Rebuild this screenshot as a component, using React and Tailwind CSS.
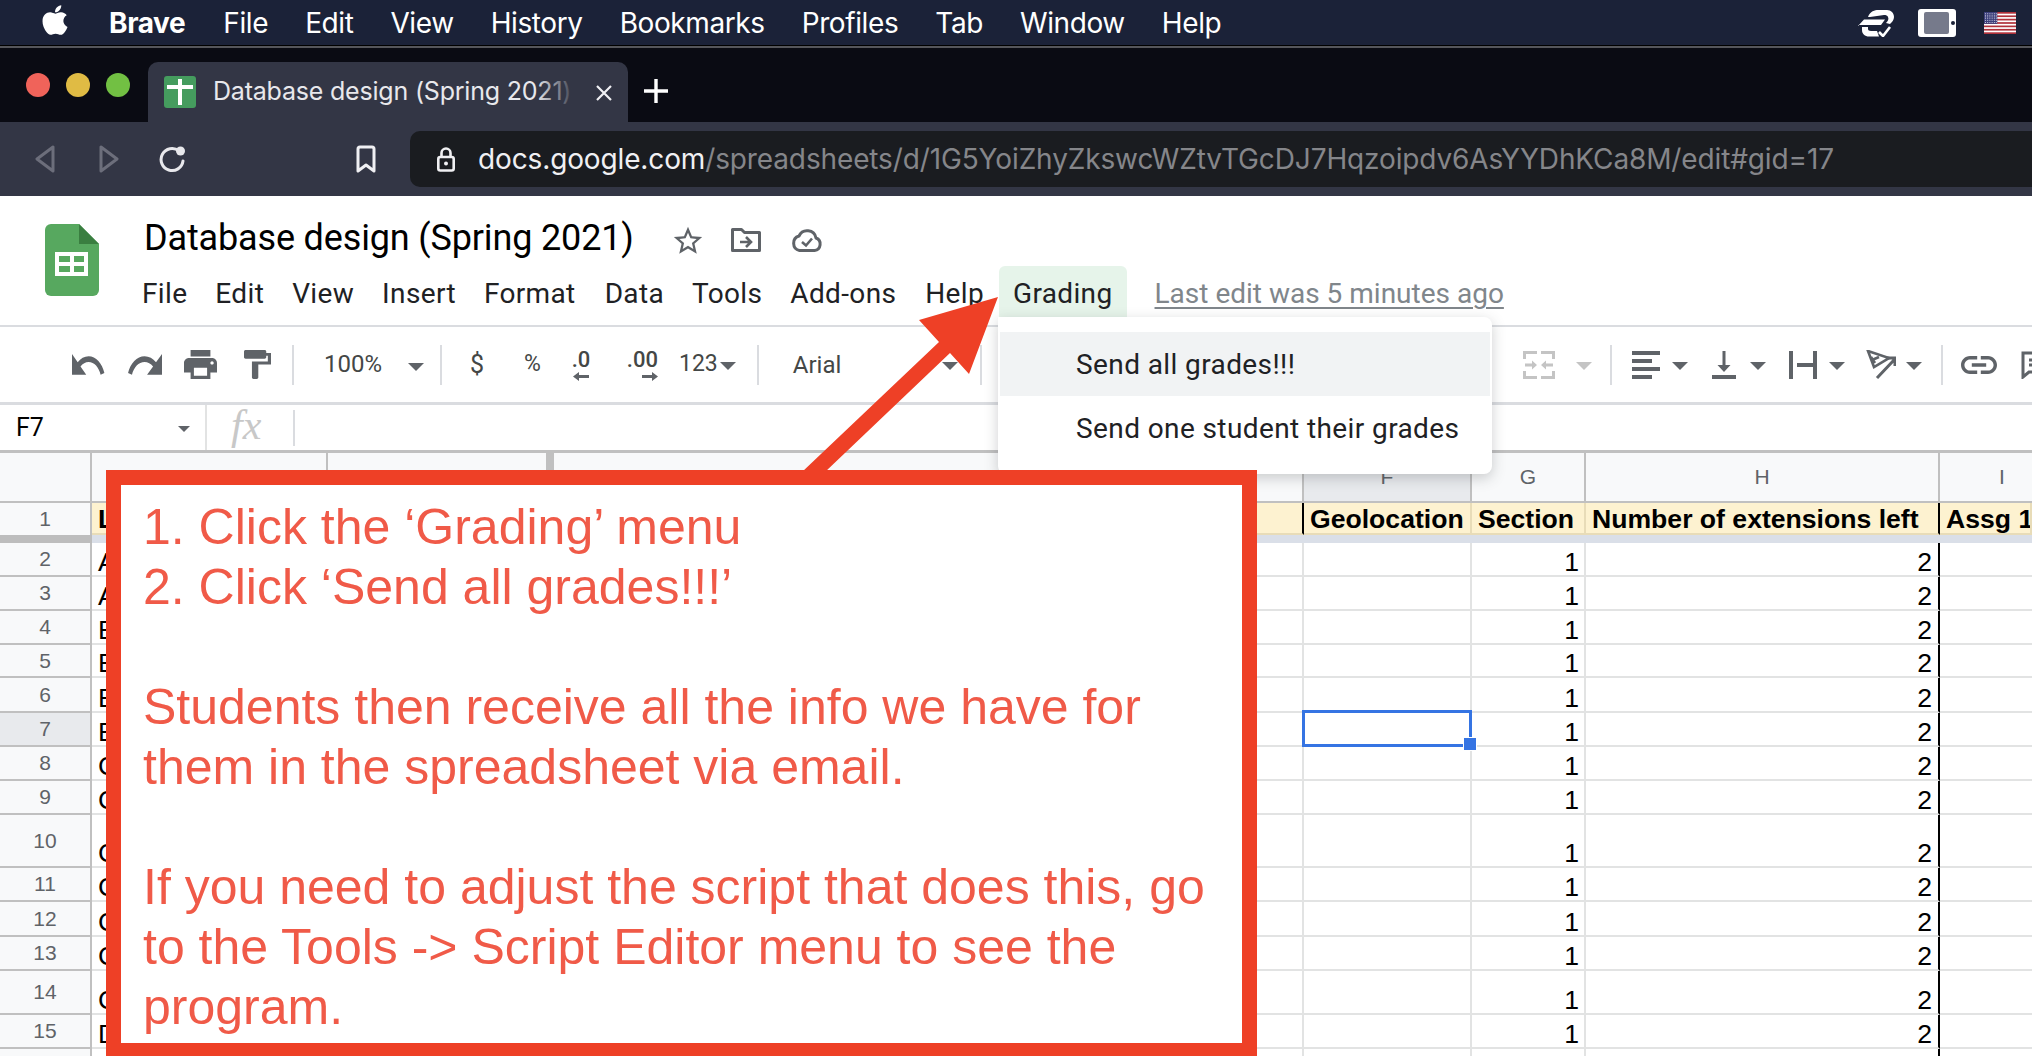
import React from 'react';
import { FaApple } from 'react-icons/fa';

const G = '#5f6368';

function Caret({ className = '', color = '#5f6368' }) {
  return (
    <svg width="16" height="8" viewBox="0 0 16 8" className={'shrink-0 ' + className}>
      <path d="M0 0h16L8 8z" fill={color} />
    </svg>
  );
}

function Mi({ w, h, d, vb = '0 0 24 24', color = G, className = '' }) {
  return (
    <svg width={w} height={h} viewBox={vb} preserveAspectRatio="none" className={'shrink-0 ' + className}>
      <path d={d} fill={color} />
    </svg>
  );
}

function Sep({ className = '' }) {
  return <div className={'w-[2px] h-[40px] bg-[#dadce0] shrink-0 ' + className} />;
}

function ToolText({ className = '', children }) {
  return <span className={"shrink-0 font-['Roboto',sans-serif] text-[#444746] " + className}>{children}</span>;
}

const rows = [
  { n: '2', l: 'A', h: 'h-[34px]' },
  { n: '3', l: 'A', h: 'h-[34px]' },
  { n: '4', l: 'B', h: 'h-[34px]' },
  { n: '5', l: 'B', h: 'h-[33px]' },
  { n: '6', l: 'B', h: 'h-[35px]' },
  { n: '7', l: 'B', h: 'h-[34px]', sel: true },
  { n: '8', l: 'C', h: 'h-[34px]' },
  { n: '9', l: 'C', h: 'h-[34px]' },
  { n: '10', l: 'C', h: 'h-[53px]' },
  { n: '11', l: 'C', h: 'h-[34px]' },
  { n: '12', l: 'C', h: 'h-[35px]' },
  { n: '13', l: 'C', h: 'h-[34px]' },
  { n: '14', l: 'C', h: 'h-[44px]' },
  { n: '15', l: 'D', h: 'h-[34px]' },
  { n: '', l: '', h: 'h-[34px]', blank: true },
];

function DataRow({ r }) {
  const cell = 'h-full border-r-2 border-b-2 border-[#e2e3e3] shrink-0 flex items-end justify-end pr-[5px] leading-[26px]';
  return (
    <div className={'flex ' + r.h}>
      <div className={'w-[92px] h-full shrink-0 border-r-2 border-b-2 border-[#c0c0c0] flex items-center justify-center text-[21px] text-[#5f6368] ' + (r.sel ? 'bg-[#e8eaed]' : 'bg-[#f8f9fa]')}>
        {r.n}
      </div>
      <div className="w-[236px] h-full shrink-0 border-r-2 border-b-2 border-[#e2e3e3] flex items-end pl-[6px] leading-[26px]">{r.l}</div>
      <div className="w-[226px] h-full shrink-0 border-r-2 border-b-2 border-[#e2e3e3]" />
      <div className="w-[272px] h-full shrink-0 border-r-2 border-b-2 border-[#e2e3e3]" />
      <div className="w-[236px] h-full shrink-0 border-r-2 border-b-2 border-[#e2e3e3]" />
      <div className="w-[242px] h-full shrink-0 border-r-2 border-b-2 border-[#e2e3e3]" />
      <div className="w-[168px] h-full shrink-0 border-r-2 border-b-2 border-[#e2e3e3]" />
      <div className={'w-[114px] ' + cell}>{r.blank ? '' : '1'}</div>
      <div className="w-[354px] h-full shrink-0 border-b-2 border-[#e2e3e3] border-r-2 [border-right-color:#000] flex items-end justify-end pr-[6px] leading-[26px]">{r.blank ? '' : '2'}</div>
      <div className="flex-1 h-full border-b-2 border-[#e2e3e3]" />
    </div>
  );
}

function ColHead({ className, children }) {
  return (
    <div className={'h-full shrink-0 border-r-2 border-[#c0c0c0] flex items-center justify-center text-[21px] text-[#5f6368] ' + className}>
      {children}
    </div>
  );
}

function HeadCell({ className, children }) {
  return (
    <div className={'h-full shrink-0 border-r-2 border-b-2 border-[#e8dcb8] bg-[#fdf2d0] flex items-center pl-[6px] pt-[4px] font-bold whitespace-nowrap overflow-hidden ' + className}>
      {children}
    </div>
  );
}

function Flag() {
  const stripes = [0, 2, 4, 6, 8, 10, 12];
  return (
    <svg width="32" height="22" viewBox="0 0 13 9" preserveAspectRatio="none" className="shrink-0">
      <rect width="13" height="9" fill="#fff" />
      {stripes.map((s) => (
        <rect key={s} y={s * 0.692} width="13" height="0.692" fill="#b0313a" />
      ))}
      <rect width="5.4" height="4.85" fill="#3c3f7a" />
      {[0.7, 1.6, 2.5, 3.4, 4.3].map((y) =>
        [0.6, 1.5, 2.4, 3.3, 4.2, 5].map((x) => <circle key={x + '-' + y} cx={x} cy={y} r="0.22" fill="#e6e6f2" />)
      )}
    </svg>
  );
}

export default function App() {
  return (
    <div className="relative w-[2032px] h-[1056px] overflow-hidden bg-white font-['Liberation_Sans',Arial,sans-serif] text-black">
      {/* macOS menu bar */}
      <div className="h-[45px] bg-[#1b2238] flex items-center text-white font-['Inter',sans-serif] text-[28px] tracking-[-0.4px] whitespace-nowrap">
        <FaApple className="ml-[39px] w-[32px] h-[34px] mb-[6px] shrink-0" />
        <span className="ml-[38px] font-bold">Brave</span>
        <span className="ml-[38px]">File</span>
        <span className="ml-[37px]">Edit</span>
        <span className="ml-[37px]">View</span>
        <span className="ml-[37px]">History</span>
        <span className="ml-[37px]">Bookmarks</span>
        <span className="ml-[37px]">Profiles</span>
        <span className="ml-[37px]">Tab</span>
        <span className="ml-[37px]">Window</span>
        <span className="ml-[37px]">Help</span>
        <div className="ml-auto flex items-center">
          <svg width="36" height="28" viewBox="0 0 36 28" className="shrink-0">
            <path d="M10 8C12 2 17 1 20 1H29C33 1 36 4 36 8C36 11 34 13 32 15L28 14C30 12 31 10 30 8C29.500 6.500 28 6 26 6L12 8Z" fill="#fff" />
            <path d="M0 17L6 10.500H27L23 16H0Z" fill="#fff" />
            <path d="M4 18H10V20C10 21 11 22 13 22H19L21 27.500H11C7 27.500 4 25 4 21Z" fill="#fff" />
            <path d="M21 23l4 4 7-9" fill="none" stroke="#fff" strokeWidth="2.6" />
          </svg>
          <div className="ml-[24px] w-[38px] h-[28px] bg-white rounded-[3px] flex items-center pl-[6px] shrink-0">
            <div className="w-[25px] h-[22px] bg-[#767a8b] rounded-[2px]" />
            <div className="ml-[2px] w-[4px] h-[4px] rounded-full bg-[#1b2238]" />
          </div>
          <div className="ml-[28px] mr-[16px]">
            <Flag />
          </div>
        </div>
      </div>
      <div className="h-[1px] bg-black" />
      <div className="h-[2px] bg-[#55565b]" />

      {/* Browser tab strip */}
      <div className="h-[74px] bg-[#0a0b13] flex items-center pl-[26px] font-['Inter',sans-serif]">
        <div className="flex gap-[16px] shrink-0">
          <div className="w-[24px] h-[24px] rounded-full bg-[#f0635a]" />
          <div className="w-[24px] h-[24px] rounded-full bg-[#e0bb44]" />
          <div className="w-[24px] h-[24px] rounded-full bg-[#72c043]" />
        </div>
        <div className="relative ml-[18px] mt-[14px] w-[480px] h-[60px] bg-[#333645] rounded-t-[10px] flex items-center shrink-0 overflow-hidden">
          <div className="ml-[16px] w-[32px] h-[32px] rounded-[3px] bg-[#459c5e] relative shrink-0">
            <div className="absolute left-[14px] top-[3px] w-[4px] h-[26px] bg-white" />
            <div className="absolute left-[3px] top-[9px] w-[26px] h-[4px] bg-white" />
          </div>
          <span className="ml-[17px] text-[25px] text-[#e8e8ec] whitespace-nowrap tracking-[-0.2px]">Database design (Spring 2021)</span>
          <div className="absolute left-[388px] top-0 w-[40px] h-full bg-gradient-to-r from-transparent to-[#333645]" />
          <svg width="16" height="16" viewBox="0 0 16 16" className="absolute left-[448px] top-[23px]">
            <path d="M1 1l14 14M15 1L1 15" stroke="#f0f0f3" strokeWidth="2.2" />
          </svg>
        </div>
        <svg width="24" height="24" viewBox="0 0 24 24" className="ml-[16px] mt-[12px] shrink-0">
          <path d="M12 0v24M0 12h24" stroke="#fff" strokeWidth="3.4" />
        </svg>
      </div>

      {/* Browser toolbar */}
      <div className="h-[74px] bg-[#333645] flex items-center font-['Inter',sans-serif]">
        <svg width="20" height="28" viewBox="0 0 20 28" className="ml-[35px] shrink-0">
          <path d="M18 2v24L2 14z" fill="none" stroke="#6c6e7b" strokeWidth="3" strokeLinejoin="round" />
        </svg>
        <svg width="20" height="28" viewBox="0 0 20 28" className="ml-[44px] shrink-0">
          <path d="M2 2v24l16-12z" fill="none" stroke="#6c6e7b" strokeWidth="3" strokeLinejoin="round" />
        </svg>
        <svg width="28" height="28" viewBox="0 0 28 28" className="ml-[39px] shrink-0">
          <path d="M21 6A11 11 0 1 0 25 16" fill="none" stroke="#e8e8ec" strokeWidth="3" strokeLinecap="round" />
          <circle cx="22.5" cy="6" r="4.5" fill="#e8e8ec" />
        </svg>
        <svg width="20" height="28" viewBox="0 0 20 28" className="ml-[170px] shrink-0">
          <path d="M2 4a2 2 0 0 1 2-2h12a2 2 0 0 1 2 2v22l-8-6-8 6z" fill="none" stroke="#f0f0f3" strokeWidth="3" strokeLinejoin="round" />
        </svg>
        <div className="ml-[34px] flex-1 h-[56px] bg-[#1a1c20] rounded-l-[10px] flex items-center pl-[27px] whitespace-nowrap">
          <svg width="18" height="26" viewBox="0 0 18 26" className="shrink-0">
            <path d="M4.5 11V7a4.5 4.5 0 0 1 9 0v4" fill="none" stroke="#f0f0f3" strokeWidth="2.6" />
            <rect x="1.3" y="11" width="15.4" height="13.5" rx="2" fill="none" stroke="#f0f0f3" strokeWidth="2.6" />
            <circle cx="9" cy="17.500" r="2" fill="#f0f0f3" />
          </svg>
          <span className="ml-[23px] text-[28px] tracking-[-0.13px] text-[#f0f0f3]">docs.google.com<span className="text-[#85868a]">/spreadsheets/d/1G5YoiZhyZkswcWZtvTGcDJ7Hqzoipdv6AsYYDhKCa8M/edit#gid=17</span></span>
        </div>
      </div>

      {/* Docs header */}
      <div className="h-[131px] border-b-2 border-[#dadce0] flex font-['Roboto',sans-serif] whitespace-nowrap">
        <svg width="54" height="72" viewBox="0 0 54 72" className="ml-[45px] mt-[28px] shrink-0">
          <path d="M34 0H6a6 6 0 0 0-6 6v60a6 6 0 0 0 6 6h42a6 6 0 0 0 6-6V20L34 0z" fill="#57a85f" />
          <path d="M34 0l20 20H34z" fill="#3a7e40" />
          <path d="M10 28h33v24H10z" fill="#fff" />
          <path d="M14 32h11v6H14zM29 32h10v6H29zM14 42h11v6H14zM29 42h10v6H29z" fill="#57a85f" />
        </svg>
        <div className="ml-[44px] flex flex-col">
          <div className="mt-[22px] h-[40px] flex items-center">
            <span className="text-[36px] text-black tracking-[-0.15px] ml-[1px]">Database design (Spring 2021)</span>
            <Mi w={34} h={34} color="#5f6368" className="ml-[37px] mt-[6px]" d="M22 9.24l-7.19-.62L12 2 9.19 8.63 2 9.24l5.46 4.73L5.82 21 12 17.27 18.18 21l-1.63-7.03L22 9.24zM12 15.4l-3.76 2.27 1-4.28-3.32-2.88 4.38-.38L12 6.1l1.71 4.04 4.38.38-3.32 2.88 1 4.28L12 15.4z" />
            <svg width="30" height="24" viewBox="0 0 30 24" className="ml-[26px] mt-[4px] shrink-0">
              <path d="M1.5 1.5h9l3 3h15v18h-27z" fill="none" stroke="#5f6368" strokeWidth="3" strokeLinejoin="round" />
              <path d="M9 14h10M15 9l5 5-5 5" fill="none" stroke="#5f6368" strokeWidth="2.6" />
            </svg>
            <svg width="32" height="24" viewBox="0 0 32 24" className="ml-[30px] mt-[4px] shrink-0">
              <path d="M25 10A9 9 0 0 0 8 8 7.5 7.5 0 0 0 8.5 22.5h15A6.5 6.5 0 0 0 25 10z" fill="none" stroke="#5f6368" strokeWidth="3" strokeLinejoin="round" />
              <path d="M11 14l4 3.5 6-7" fill="none" stroke="#5f6368" strokeWidth="2.6" />
            </svg>
          </div>
          <div className="mt-[8px] h-[52px] flex items-center text-[28px] tracking-[0.35px] text-[#202124] ml-[-1px] [&>span]:pt-[4px]">
            <span>File</span>
            <span className="ml-[28px]">Edit</span>
            <span className="ml-[28px]">View</span>
            <span className="ml-[28px]">Insert</span>
            <span className="ml-[28px]">Format</span>
            <span className="ml-[29px]">Data</span>
            <span className="ml-[28px]">Tools</span>
            <span className="ml-[28px]">Add-ons</span>
            <span className="ml-[29px]">Help</span>
            <span className="ml-[15px] h-full px-[14px] flex items-center bg-[#e6f4ea] rounded-t-[6px]">Grading</span>
            <span className="ml-[28px] tracking-normal text-[#80868b] underline underline-offset-[4px] decoration-2">Last edit was 5 minutes ago</span>
          </div>
        </div>
      </div>

      {/* Sheets toolbar */}
      <div className="h-[75px] flex items-center overflow-hidden whitespace-nowrap">
        <Mi w={34} h={22} className="ml-[72px]" d="M12.5 8c-2.65 0-5.05.99-6.9 2.6L2 7v9h9l-3.62-3.62c1.39-1.16 3.16-1.88 5.12-1.88 3.54 0 6.55 2.31 7.6 5.5l2.37-.78C21.08 11.03 17.15 8 12.5 8z" vb="2 7 21.5 9.5" />
        <Mi w={34} h={22} className="ml-[22px]" d="M18.4 10.6C16.55 8.99 14.15 8 11.5 8c-4.65 0-8.58 3.03-9.96 7.22L3.9 16c1.05-3.19 4.05-5.5 7.6-5.5 1.95 0 3.73.72 5.12 1.88L13 16h9V7l-3.6 3.6z" vb="1.5 7 20.5 9.5" />
        <Mi w={33} h={29} className="ml-[22px]" d="M19 8H5c-1.66 0-3 1.34-3 3v6h4v4h12v-4h4v-6c0-1.66-1.34-3-3-3zm-3 11H8v-5h8v5zm3-7c-.55 0-1-.45-1-1s.45-1 1-1 1 .45 1 1-.45 1-1 1zm-1-9H6v4h12V3z" vb="2 3 20 18" />
        <Mi w={27} h={29} className="ml-[27px]" d="M18 4V3c0-.55-.45-1-1-1H5c-.55 0-1 .45-1 1v4c0 .55.45 1 1 1h12c.55 0 1-.45 1-1V6h1v4H9v11c0 .55.45 1 1 1h2c.55 0 1-.45 1-1v-9h8V4h-3z" vb="4 2 17 20" />
        <Sep className="ml-[21px]" />
        <ToolText className="ml-[30px] text-[24px] mb-[2px]">100%</ToolText>
        <Caret className="ml-[26px] mt-[4px]" />
        <Sep className="ml-[16px]" />
        <ToolText className="ml-[28px] text-[25px]">$</ToolText>
        <ToolText className="ml-[40px] text-[23px]">%</ToolText>
        <div className="ml-[28px] flex flex-col items-center w-[24px] shrink-0">
          <ToolText className="text-[22px] leading-[24px] font-medium">.0</ToolText>
          <Mi w={16} h={9} vb="0 0 16 9" d="M0 4.5L6 0v3h10v3H6v3z" />
        </div>
        <div className="ml-[29px] flex flex-col items-end w-[36px] shrink-0">
          <ToolText className="text-[22px] leading-[24px] font-medium">.00</ToolText>
          <Mi w={16} h={9} vb="0 0 16 9" d="M16 4.5L10 0v3H0v3h10v3z" />
        </div>
        <ToolText className="ml-[21px] text-[23px]">123</ToolText>
        <Caret className="ml-[2px] mt-[2px]" />
        <Sep className="ml-[21px]" />
        <ToolText className="ml-[34px] text-[24px]">Arial</ToolText>
        <Caret className="ml-[101px] mt-[2px]" />
        <Sep className="ml-[22px]" />
        <div className="ml-[507px] w-[3px] h-[28px] bg-[#5f6368] shrink-0" />
        <svg width="32" height="28" viewBox="0 0 32 28" className="ml-[31px] shrink-0">
          <path d="M0 8V0h14v3H3v5zM32 8V0H18v3h11v5zM0 20v8h14v-3H3v-5zM32 20v8H18v-3h11v-5zM2 12.5h7v-3l5 4.5-5 4.5v-3H2zM30 12.5h-7v-3l-5 4.5 5 4.5v-3h7z" fill="#c4c4c4" />
        </svg>
        <Caret color="#c4c4c4" className="ml-[21px] mt-[2px]" />
        <Sep className="ml-[18px]" />
        <svg width="28" height="28" viewBox="0 0 28 28" className="ml-[20px] shrink-0">
          <path d="M0 0h28v4H0zM0 8h20v4H0zM0 16h28v4H0zM0 24h20v4H0z" fill="#5f6368" />
        </svg>
        <Caret className="ml-[12px] mt-[2px]" />
        <svg width="24" height="28" viewBox="0 0 24 28" className="ml-[24px] shrink-0">
          <path d="M10.500 0h3v14h5l-6.500 7-6.500-7h5zM0 24h24v4H0z" fill="#5f6368" />
        </svg>
        <Caret className="ml-[14px] mt-[2px]" />
        <svg width="28" height="28" viewBox="0 0 28 28" className="ml-[23px] shrink-0">
          <path d="M0 0h4v28H0zM24 0h4v28h-4zM8 12h16v4H8z" fill="#5f6368" />
        </svg>
        <Caret className="ml-[12px] mt-[2px]" />
        <svg width="30" height="30" viewBox="0 0 30 30" className="ml-[21px] shrink-0">
          <path d="M2 1l21 7-15 9zM5 7l4 6M6 10l7-3" fill="none" stroke="#5f6368" strokeWidth="2.6" />
          <path d="M11 28L28 10M21 8h8v8" fill="none" stroke="#5f6368" strokeWidth="3" />
        </svg>
        <Caret className="ml-[10px] mt-[2px]" />
        <Sep className="ml-[19px]" />
        <Mi w={36} h={18} className="ml-[18px]" vb="2 7 20 10" d="M3.9 12c0-1.71 1.39-3.1 3.1-3.1h4V7H7c-2.76 0-5 2.24-5 5s2.24 5 5 5h4v-1.9H7c-1.71 0-3.1-1.39-3.1-3.1zM8 13h8v-2H8v2zm9-6h-4v1.9h4c1.71 0 3.1 1.39 3.1 3.1s-1.39 3.1-3.1 3.1h-4V17h4c2.76 0 5-2.24 5-5s-2.24-5-5-5z" />
        <svg width="28" height="28" viewBox="0 0 28 28" className="ml-[24px] shrink-0">
          <path d="M2 2h24v19H8l-6 5zM8 9h14M8 14h14" fill="none" stroke="#5f6368" strokeWidth="3" />
        </svg>
      </div>
      <div className="h-[3px] bg-[#dadce0]" />

      {/* Formula bar */}
      <div className="h-[45px] flex items-center">
        <span className="ml-[16px] w-[160px] text-[25px] font-['Roboto',sans-serif] text-black">F7</span>
        <Caret className="scale-75 mt-[2px]" />
        <div className="ml-[13px] w-[2px] h-full bg-[#e2e3e3]" />
        <span className="ml-[24px] mb-[6px] w-[38px] font-['Liberation_Serif',serif] italic text-[42px] leading-[42px] text-[#c8c8c8]">fx</span>
        <div className="ml-[24px] w-[2px] h-[36px] bg-[#dadce0]" />
      </div>
      <div className="h-[3px] bg-[#c0c0c0]" />

      {/* Sheet */}
      <div className="text-[26.6px]">
        <div className="flex h-[50px] w-[2070px] bg-[#f8f9fa] border-b-2 border-[#c0c0c0]">
          <ColHead className="w-[92px]" />
          <ColHead className="w-[236px]">A</ColHead>
          <ColHead className="w-[226px] border-r-[8px]">B</ColHead>
          <ColHead className="w-[272px]">C</ColHead>
          <ColHead className="w-[236px]">D</ColHead>
          <ColHead className="w-[242px]">E</ColHead>
          <ColHead className="w-[168px] bg-[#e8eaed]">F</ColHead>
          <ColHead className="w-[114px]">G</ColHead>
          <ColHead className="w-[354px]">H</ColHead>
          <ColHead className="w-[126px] border-r-0">I</ColHead>
        </div>
        <div className="flex h-[32px]">
          <div className="w-[92px] h-full shrink-0 bg-[#f8f9fa] border-r-2 border-[#c0c0c0] flex items-center justify-center text-[21px] text-[#5f6368]">1</div>
          <HeadCell className="w-[236px]">L</HeadCell>
          <HeadCell className="w-[226px]" />
          <HeadCell className="w-[272px]" />
          <HeadCell className="w-[236px]" />
          <HeadCell className="w-[242px] [border-right-color:#000]" />
          <HeadCell className="w-[168px]">Geolocation</HeadCell>
          <HeadCell className="w-[114px]">Section</HeadCell>
          <HeadCell className="w-[354px] [border-right-color:#000]">Number of extensions left</HeadCell>
          <HeadCell className="flex-1">Assg 1</HeadCell>
        </div>
        <div className="flex h-[8px] bg-[#dadfe8]">
          <div className="w-[92px] h-full bg-[#bdbdbd]" />
        </div>
        {rows.map((r, i) => (
          <DataRow key={i} r={r} />
        ))}
      </div>

      {/* Selected cell */}
      <div className="absolute left-[1302px] top-[710px] w-[170px] h-[37px] border-[3px] border-[#3574e3]" />
      <div className="absolute left-[1463px] top-[737px] w-[14px] h-[14px] bg-[#3574e3] border border-white" />

      {/* Grading dropdown */}
      <div className="absolute left-[998px] top-[317px] w-[494px] h-[157px] bg-white rounded-[8px] rounded-tl-none shadow-[0_4px_14px_rgba(60,64,67,0.25)] pt-[15px] px-[2px] font-['Roboto',sans-serif] text-[28px] tracking-[0.4px] text-[#202124] whitespace-nowrap">
        <div className="h-[64px] bg-[#f1f3f4] flex items-center pl-[76px] pt-[2px]">Send all grades!!!</div>
        <div className="h-[64px] flex items-center pl-[76px] pt-[2px]">Send one student their grades</div>
      </div>

      {/* Arrow annotation */}
      <svg width="220" height="190" viewBox="0 0 220 190" className="absolute left-[790px] top-[290px]">
        <path d="M208 7L129 30 149 52 12 182H35L160 63 179 84z" fill="#ee4026" />
      </svg>

      {/* Annotation box */}
      <div className="absolute left-[106px] top-[470px] w-[1151px] h-[586px] bg-white border-[15px] border-b-[13px] border-[#ee4026] pl-[22px] pt-[12px] text-[50px] leading-[60px] text-[#f05a48] whitespace-nowrap">
        <div>1. Click the ‘Grading’ menu</div>
        <div>2. Click ‘Send all grades!!!’</div>
        <div className="h-[60px]" />
        <div>Students then receive all the info we have for</div>
        <div>them in the spreadsheet via email.</div>
        <div className="h-[60px]" />
        <div>If you need to adjust the script that does this, go</div>
        <div>to the Tools -&gt; Script Editor menu to see the</div>
        <div>program.</div>
      </div>
    </div>
  );
}
